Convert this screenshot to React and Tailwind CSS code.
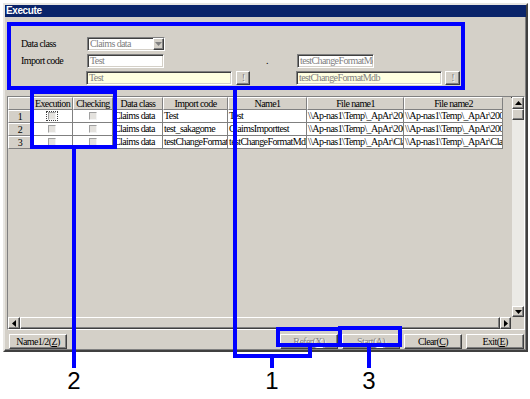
const raised =
  "bg-[#d4d0c8] border border-t-white border-l-white border-b-[#404040] border-r-[#404040] shadow-[inset_-1px_-1px_0_#808080]";
const sunken =
  "border border-t-[#808080] border-l-[#808080] border-b-white border-r-white shadow-[inset_1px_1px_0_#404040,inset_-1px_-1px_0_#d4d0c8]";
const dim = "text-[#808080] [text-shadow:1px_1px_0_#fff]";

const Arrow = ({ dir = "down", color = "#000" }) => {
  const d = {
    down: "M0 0h7L3.5 4z",
    up: "M0 4h7L3.5 0z",
    left: "M4 0v7L0 3.5z",
    right: "M0 0v7L4 3.5z",
  }[dir];
  const vert = dir === "up" || dir === "down";
  return (
    <svg width={vert ? 7 : 4} height={vert ? 4 : 7} viewBox={vert ? "0 0 7 4" : "0 0 4 7"}>
      <path d={d} fill={color} />
    </svg>
  );
};

const Field = ({ w, yellow, children }) => (
  <div
    className={`${sunken} h-[14px] ${w} ${yellow ? "bg-[#ffffe1]" : "bg-white"} text-[#808080] pl-[2px] leading-[12px] overflow-hidden whitespace-nowrap`}
  >
    {children}
  </div>
);

const SmallBtn = ({ w }) => (
  <div className={`${raised} ${w} h-[14px] flex items-center justify-center leading-none ${dim}`}>!</div>
);

const Btn = ({ label, hot, disabled, className = "" }) => (
  <div
    className={`${raised} w-[58px] h-[15px] flex items-center justify-center leading-none ${disabled ? dim : ""} ${className}`}
  >
    {label}(<span className="underline">{hot}</span>)
  </div>
);

const cols = [
  { w: "w-[41px]", title: "Execution" },
  { w: "w-[40px]", title: "Checking" },
  { w: "w-[50px]", title: "Data class" },
  { w: "w-[65px]", title: "Import code" },
  { w: "w-[79px]", title: "Name1" },
  { w: "w-[97px]", title: "File name1" },
  { w: "w-[99px]", title: "File name2" },
];

const rows = [
  ["Claims data", "Test", "Test", "\\\\Ap-nas1\\Temp\\_ApAr\\200(", "\\\\Ap-nas1\\Temp\\_ApAr\\200("],
  ["Claims data", "test_sakagome", "ClaimsImporttest", "\\\\Ap-nas1\\Temp\\_ApAr\\200(", "\\\\Ap-nas1\\Temp\\_ApAr\\200("],
  ["Claims data", "testChangeFormatMdb", "testChangeFormatMdb", "\\\\Ap-nas1\\Temp\\_ApAr\\Cla", "\\\\Ap-nas1\\Temp\\_ApAr\\Cla"],
];

const Check = ({ focus }) => (
  <div className={`w-[12px] h-[10px] flex items-center justify-center ${focus ? "border border-dotted border-[#404040]" : ""}`}>
    <div className="w-[8px] h-[8px] bg-[#e4e2de] border border-t-[#a0a0a0] border-l-[#a0a0a0] border-b-[#f4f4f4] border-r-[#f4f4f4]" />
  </div>
);

const Blue = ({ className }) => <div className={`absolute bg-[#0000ff] ${className}`} />;

export default function App() {
  return (
    <div className="relative w-[530px] h-[399px] bg-white overflow-hidden font-['Liberation_Serif',serif] text-[10px] tracking-[-0.6px] text-black">
      {/* window */}
      <div className="ml-[3px] mt-[3px] w-[525px] h-[349px] bg-[#d4d0c8] border-2 border-t-[#e8e6e2] border-l-[#e8e6e2] border-b-[#404040] border-r-[#404040] shadow-[inset_-1px_-1px_0_#808080] flex flex-col">
        <div className="h-[12px] bg-[#0a246a] text-white font-['Liberation_Sans',sans-serif] font-bold text-[10px] tracking-[-0.4px] leading-[12px] pl-[1px]">
          Execute
        </div>

        {/* form */}
        <div className="mt-[19px] flex items-center pl-[16px]">
          <div className="w-[66px]">Data class</div>
          <div className={`${sunken} w-[78px] h-[14px] bg-white flex items-center`}>
            <div className="flex-1 pl-[2px] text-[#808080]">Claims data</div>
            <div className={`${raised} w-[11px] h-[12px] flex items-center justify-center`}>
              <Arrow dir="down" color="#808080" />
            </div>
          </div>
        </div>
        <div className="mt-[2px] flex items-center pl-[16px]">
          <div className="w-[66px]">Import code</div>
          <Field w="w-[77px]">Test</Field>
          <div className="w-[133px] pl-[102px]">.</div>
          <Field w="w-[77px]">testChangeFormatMdb</Field>
        </div>
        <div className="mt-[3px] flex items-center pl-[81px]">
          <Field w="w-[146px]" yellow>Test</Field>
          <div className="ml-[4px]"><SmallBtn w="w-[14px]" /></div>
          <div className="ml-[46px]"><Field w="w-[146px]" yellow>testChangeFormatMdb</Field></div>
          <div className="ml-[3px]"><SmallBtn w="w-[15px]" /></div>
        </div>

        {/* grid */}
        <div className={`mt-[11px] ml-[2px] w-[518px] h-[234px] border border-t-[#808080] border-l-[#808080] border-b-white border-r-white shadow-[inset_1px_1px_0_#404040] flex`}>
          <div className="w-[503px] flex flex-col">
            <div className="flex-1 bg-[#d4d0c8] overflow-hidden">
              <div className="flex h-[13px]">
                <div className={`w-[24px] border border-t-white border-l-white border-b-[#808080] border-r-[#808080] bg-[#d4d0c8]`} />
                {cols.map((c) => (
                  <div
                    key={c.title}
                    className={`${c.w} border border-t-white border-l-white border-b-[#808080] border-r-[#808080] bg-[#d4d0c8] text-center leading-[11px] whitespace-nowrap overflow-hidden`}
                  >
                    {c.title}
                  </div>
                ))}
              </div>
              {rows.map((r, i) => (
                <div key={i} className="flex h-[13px]">
                  <div className="w-[24px] border border-t-white border-l-white border-b-[#808080] border-r-[#808080] bg-[#d4d0c8] text-center leading-[11px]">
                    {i + 1}
                  </div>
                  <div className="w-[41px] bg-white border-r border-b border-[#808080] flex items-center justify-center">
                    <Check focus={i === 0} />
                  </div>
                  <div className="w-[40px] bg-white border-r border-b border-[#808080] flex items-center justify-center">
                    <Check />
                  </div>
                  {r.map((t, j) => (
                    <div
                      key={j}
                      className={`${cols[j + 2].w} bg-white border-r border-b border-[#808080] pl-[1px] leading-[12px] whitespace-nowrap overflow-hidden`}
                    >
                      {t}
                    </div>
                  ))}
                </div>
              ))}
            </div>
            {/* horizontal scrollbar */}
            <div className="h-[12px] flex bg-[#ebeae6]">
              <div className={`${raised} w-[12px] flex items-center justify-center`}>
                <Arrow dir="left" />
              </div>
              <div className={`${raised} flex-1`} />
              <div className={`${raised} w-[11px] flex items-center justify-center`}>
                <Arrow dir="right" />
              </div>
            </div>
          </div>
          {/* vertical scrollbar */}
          <div className="flex-1 flex flex-col">
            <div className="flex-1 flex flex-col bg-[#ebeae6] w-[12px] ml-[1px]">
              <div className={`${raised} h-[12px] flex items-center justify-center`}>
                <Arrow dir="up" />
              </div>
              <div className={`${raised} h-[11px]`} />
              <div className="flex-1" />
              <div className={`${raised} h-[11px] flex items-center justify-center`}>
                <Arrow dir="down" />
              </div>
            </div>
            <div className="h-[12px] bg-[#d4d0c8]" />
          </div>
        </div>

        {/* buttons */}
        <div className="mt-[4px] flex items-center pl-[4px]">
          <Btn label="Name1/2" hot="Z" />
          <Btn label="Refer" hot="X" disabled className="ml-[213px]" />
          <Btn label="Start" hot="A" disabled className="ml-[4px]" />
          <Btn label="Clear" hot="C" className="ml-[4px]" />
          <Btn label="Exit" hot="E" className="ml-[4px]" />
        </div>
      </div>

      {/* annotation overlays */}
      <div className="absolute left-[7px] top-[22px] w-[458px] h-[68px] border-4 border-[#0000ff]" />
      <div className="absolute left-[30px] top-[90px] w-[87px] h-[59px] border-4 border-[#0000ff]" />
      <div className="absolute left-[276px] top-[327px] w-[66px] h-[20px] border-4 border-[#0000ff]" />
      <div className="absolute left-[338px] top-[326px] w-[64px] h-[21px] border-4 border-[#0000ff]" />
      <Blue className="left-[72px] top-[149px] w-[4px] h-[219px]" />
      <Blue className="left-[233px] top-[90px] w-[4px] h-[268px]" />
      <Blue className="left-[233px] top-[354px] w-[79px] h-[4px]" />
      <Blue className="left-[308px] top-[347px] w-[4px] h-[10px]" />
      <Blue className="left-[270px] top-[357px] w-[4px] h-[11px]" />
      <Blue className="left-[367px] top-[347px] w-[4px] h-[21px]" />

      <div className="absolute left-[60px] top-[369px] w-[28px] text-center font-['Liberation_Sans',sans-serif] text-[24px] leading-none tracking-normal">2</div>
      <div className="absolute left-[258px] top-[369px] w-[28px] text-center font-['Liberation_Sans',sans-serif] text-[24px] leading-none tracking-normal">1</div>
      <div className="absolute left-[355px] top-[369px] w-[28px] text-center font-['Liberation_Sans',sans-serif] text-[24px] leading-none tracking-normal">3</div>
    </div>
  );
}
